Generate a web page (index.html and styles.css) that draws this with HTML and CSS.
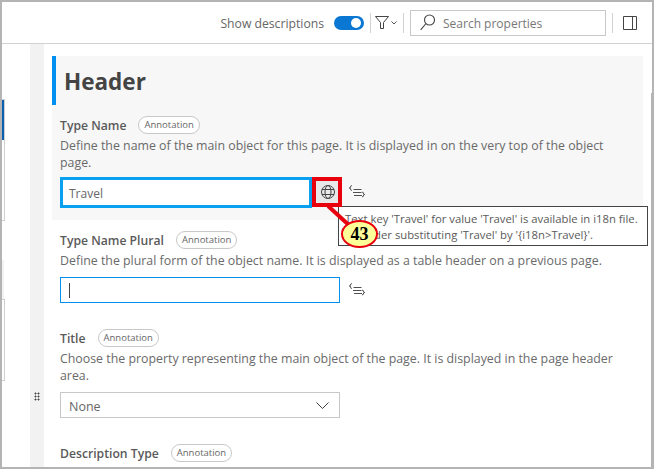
FILE: index.html
```html
<!DOCTYPE html>
<html lang="en">
<head>
<meta charset="utf-8">
<title>Properties</title>
<link rel="stylesheet" href="styles.css">
</head>
<body>
<div class="window">
  <header class="toolbar">
    <span class="toolbar-label">Show descriptions</span>
    <span class="toggle"><span class="toggle-knob"></span></span>
    <span class="divider"></span>
    <span class="filter">
      <svg width="14" height="13" viewBox="0 0 14 13" fill="none" stroke="#444" stroke-width="1"><path d="M.5.500h13L8.500 6.500v6h-3v-6z"/></svg>
      <svg width="6" height="4" viewBox="0 0 6 4" fill="none" stroke="#555" stroke-width="1"><path d="M.5.5 3 3 5.500.5"/></svg>
    </span>
    <span class="divider"></span>
    <div class="search">
      <svg width="15" height="17" viewBox="0 0 15 17" fill="none" stroke="#444" stroke-width="1.100"><circle cx="9.500" cy="6" r="5"/><path d="M6 9.500.7 15.800"/></svg>
      <span class="search-text">Search properties</span>
    </div>
    <span class="divider"></span>
    <svg class="panel-icon" width="14" height="14" viewBox="0 0 14 14" fill="none" stroke="#444" stroke-width="1"><path d="M.5.500h13v13H.5zM9.500.500v13"/></svg>
  </header>
  <div class="body">
    <aside class="nav">
      <span class="nav-line nav-line-a"></span>
      <span class="nav-mark"></span>
      <span class="nav-light"></span>
      <span class="nav-line nav-line-b"></span>
    </aside>
    <div class="gutter"><span class="grip"></span></div>
    <main class="content">
      <section class="group">
        <h1 class="group-title">Header</h1>
        <div class="prop prop-first">
          <div class="prop-head"><span class="prop-name">Type Name</span><span class="pill">Annotation</span></div>
          <p class="prop-desc">Define the name of the main object for this page. It is displayed in on the very top of the object page.</p>
          <div class="field-row">
            <div class="input input-active"><span class="input-value">Travel</span></div>
            <span class="globe-btn">
              <svg width="16" height="16" viewBox="0 0 16 16" fill="none" stroke="#444" stroke-width="1"><circle cx="8" cy="8" r="6.500"/><ellipse cx="8" cy="8" rx="3" ry="6.500"/><path d="M2 5.500h12M2 10.500h12"/></svg>
            </span>
            <svg class="expr" width="18" height="14" viewBox="0 0 18 14" fill="none" stroke="#505050" stroke-width="1"><path d="M4 1.500 2.500 2.300v1.200L1.200 4l1.300.5v1.200L4 6.500M14 8l1.500.8V10l1.300.5-1.300.5v1.200L14 13M5.500 5.500h8M5 8.500h8.500M6 11.500h8"/></svg>
          </div>
        </div>
      </section>
      <div class="prop prop-plural">
        <div class="prop-head"><span class="prop-name">Type Name Plural</span><span class="pill">Annotation</span></div>
        <p class="prop-desc">Define the plural form of the object name. It is displayed as a table header on a previous page.</p>
        <div class="field-row">
          <div class="input input-focus"><span class="caret"></span></div>
          <svg class="expr" width="18" height="14" viewBox="0 0 18 14" fill="none" stroke="#505050" stroke-width="1"><path d="M4 1.500 2.500 2.300v1.200L1.200 4l1.300.5v1.200L4 6.500M14 8l1.500.8V10l1.300.5-1.300.5v1.200L14 13M5.500 5.500h8M5 8.500h8.500M6 11.500h8"/></svg>
        </div>
      </div>
      <div class="prop">
        <div class="prop-head"><span class="prop-name">Title</span><span class="pill">Annotation</span></div>
        <p class="prop-desc">Choose the property representing the main object of the page. It is displayed in the page header area.</p>
        <div class="select">
          <span class="select-value">None</span>
          <svg width="13" height="7" viewBox="0 0 13 7" fill="none" stroke="#444" stroke-width="1"><path d="M.5.500l6 6 6-6"/></svg>
        </div>
      </div>
      <div class="prop">
        <div class="prop-head"><span class="prop-name">Description Type</span><span class="pill">Annotation</span></div>
      </div>
    </main>
  </div>
  <span class="scroll-edge"></span>
  <div class="tooltip">Text key 'Travel' for value 'Travel' is available in i18n file.<br>Consider substituting 'Travel' by '{i18n&gt;Travel}'.</div>
  <div class="callout-box"></div>
  <svg class="callout-line" width="40" height="30" viewBox="0 0 40 30"><path d="M0 0 24 22" stroke="#e8000d" stroke-width="4" fill="none"/></svg>
  <div class="callout-badge">43</div>
</div>
</body>
</html>
```
FILE: styles.css
```css
* { box-sizing: border-box; }
html, body { margin: 0; padding: 0; }
body { width: 654px; height: 469px; overflow: hidden; background: #fff; font-family: "Open Sans", "Noto Sans", sans-serif; color: #5f5f5f; }
.window { position: relative; width: 654px; height: 469px; border: 2px solid #b4b4b4; display: flex; flex-direction: column; overflow: hidden; background: #fff; }
.toolbar { height: 42px; flex: none; display: flex; align-items: center; justify-content: flex-end; border-bottom: 1px solid #d2d2d2; padding-right: 15px; }
.toolbar-label { font-size: 12.2px; color: #666; margin-right: 10px; padding-top: 2px; }
.toggle { width: 30px; height: 14px; border-radius: 7px; background: #0a78d2; display: flex; align-items: center; justify-content: flex-end; padding-right: 3px; margin-right: 6px; }
.toggle-knob { width: 10px; height: 10px; border-radius: 50%; background: #fff; }
.divider { width: 1px; height: 20px; background: #d2d2d2; }
.filter { display: flex; align-items: center; gap: 2px; margin: 0 6px 0 4px; }
.search { width: 196px; height: 26px; margin: 0 6px; border: 1px solid #c8c8c8; display: flex; align-items: center; gap: 8px; padding-left: 9px; font-size: 12px; color: #777; }
.search-text { padding-top: 2px; }
.panel-icon { margin-left: 10px; }
.body { flex: 1; display: flex; min-height: 0; }
.nav { width: 28px; flex: none; position: relative; }
.nav-mark { position: absolute; left: 0; top: 56px; width: 2px; height: 40px; background: #0a5fb0; }
.nav-light { position: absolute; left: 0; top: 216px; width: 2px; height: 39px; background: #f2f2f2; }
.nav-line { position: absolute; left: 0; width: 3px; border-right: 1px solid #cfcfcf; border-bottom: 1px solid #cfcfcf; }
.nav-line-a { top: 55px; height: 122px; border-top: 1px solid #cfcfcf; }
.nav-line-b { top: 255px; height: 82px; border-top: 1px solid #cfcfcf; }
.gutter { width: 14px; flex: none; background: #f2f2f2; display: flex; justify-content: center; padding-top: 348px; }
.grip { width: 6px; height: 9px; background-image: radial-gradient(circle, #444 .9px, transparent 1.100px); background-size: 3px 3px; }
.content { flex: 1; padding: 12px 9px 0 8px; min-width: 0; }
.group { background: #f7f7f7; height: 164px; position: relative; }
.group::before { content: ""; position: absolute; left: 0; top: 0; width: 4px; height: 49px; background: #0090f0; }
.group-title { margin: 0; padding: 11px 0 0 12px; font-size: 22.5px; line-height: 30px; font-weight: 700; color: #444; height: 49px; }
.prop { padding-left: 8px; margin-top: 26px; }
.prop-first { margin-top: 0; padding-top: 11px; }
.prop-plural { margin-top: 11px; }
.prop-head { display: flex; align-items: center; height: 18px; }
.prop-name { font-size: 12.2px; font-weight: 600; color: #5a5a5a; margin-right: 12px; }
.pill { height: 18px; line-height: 16px; padding: 0 5px; border: 1px solid #c8c8c8; border-radius: 9px; font-size: 9.500px; color: #666; background: #fff; }
.prop-desc { margin: 3px 0 0; font-size: 12.36px; line-height: 17px; color: #6a6a6a; width: 560px; }
.field-row { display: flex; align-items: flex-start; margin-top: 6px; }
.prop-plural .field-row { margin-top: 8px; }
.input { width: 280px; height: 26px; background: #fff; font-size: 12px; color: #666; display: flex; align-items: center; padding-left: 8px; }
.input-active { height: 31px; width: 252px; border: 3px solid #0aa0f0; padding-left: 6px; }
.input-value { padding-top: 2px; }
.input-focus { border: 1px solid #0090f0; }
.caret { width: 1px; height: 15px; background: #444; }
.globe-btn { width: 23px; height: 23px; margin: 3px 0 0 4px; background: #e8e8e8; border-radius: 2px; display: flex; align-items: center; justify-content: center; }
.expr { margin: 7px 0 0 9px; }
.prop-plural .expr { margin-top: 5px; margin-left: 8px; }
.select { width: 280px; height: 26px; margin-top: 8px; border: 1px solid #c8c8c8; display: flex; align-items: center; justify-content: space-between; padding: 0 10px 0 8px; font-size: 12.5px; color: #666; }
.select-value { padding-top: 2px; }
.scroll-edge { position: absolute; right: 0; top: 91px; bottom: 0; width: 1px; background: #b4b4b4; }
.tooltip { position: absolute; left: 336px; top: 204px; width: 310px; height: 40px; padding: 4px 0 0 6px; background: #fff; border: 1px solid #444; font-size: 11.3px; line-height: 16px; color: #5a5a5a; white-space: nowrap; }
.callout-box { position: absolute; left: 310px; top: 175px; width: 30px; height: 30px; border: 4px solid #e8000d; }
.callout-line { position: absolute; left: 325px; top: 203px; }
.callout-badge { position: absolute; left: 339px; top: 218px; width: 37px; height: 28px; border-radius: 50%; background: #ffff9a; border: 2px solid #e8000d; font-family: "Liberation Serif", serif; font-weight: 700; font-size: 18px; line-height: 24px; text-align: center; color: #000; }
```
